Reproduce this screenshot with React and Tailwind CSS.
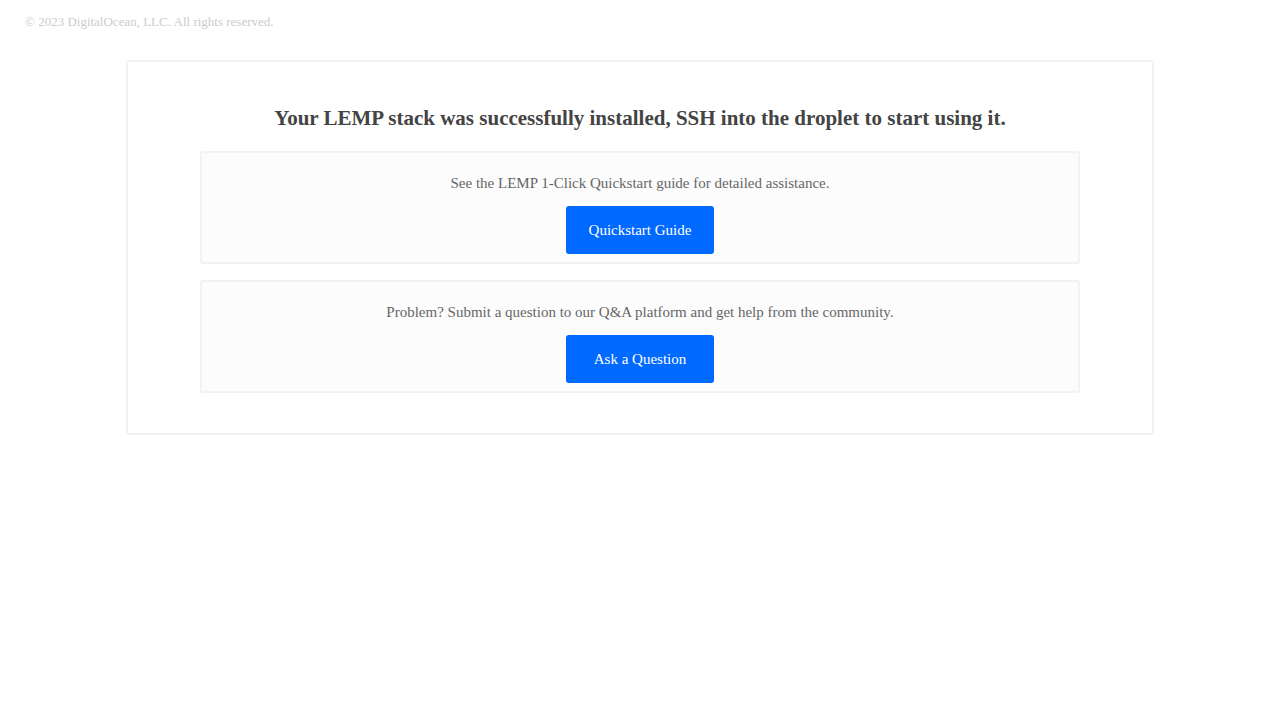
export default function App() {
  return (
    <div className="min-h-screen bg-white font-['Liberation_Serif',serif]">
      <div className="px-[25px] pt-[13px] text-[13px] leading-[17px] text-[#cccccc]">
        © 2023 DigitalOcean, LLC. All rights reserved.
      </div>
      <div className="mx-auto mt-[30px] w-[1028px] rounded-[3px] border-2 border-[#f2f2f2] px-[72px] pt-[44px] pb-[40px]">
        <h1 className="mb-[21px] text-center text-[21px] font-bold leading-[24px] text-[#444444]">
          Your LEMP stack was successfully installed, SSH into the droplet to start using it.
        </h1>
        <div className="flex flex-col gap-4">
          <InfoBox
            text="See the LEMP 1-Click Quickstart guide for detailed assistance."
            button="Quickstart Guide"
          />
          <InfoBox
            text="Problem? Submit a question to our Q&A platform and get help from the community."
            button="Ask a Question"
          />
        </div>
      </div>
    </div>
  );
}

function InfoBox({ text, button }) {
  return (
    <div className="flex flex-col items-center rounded-[3px] border-2 border-[#f2f2f2] bg-[#fcfcfc] pt-[22px] pb-[8px]">
      <p className="text-[15px] leading-[17px] text-[#666666]">{text}</p>
      <a
        href="#"
        className="mt-[14px] flex h-[48px] w-[148px] items-center justify-center rounded-[3px] bg-[#0069ff] text-[15px] text-white"
      >
        {button}
      </a>
    </div>
  );
}
